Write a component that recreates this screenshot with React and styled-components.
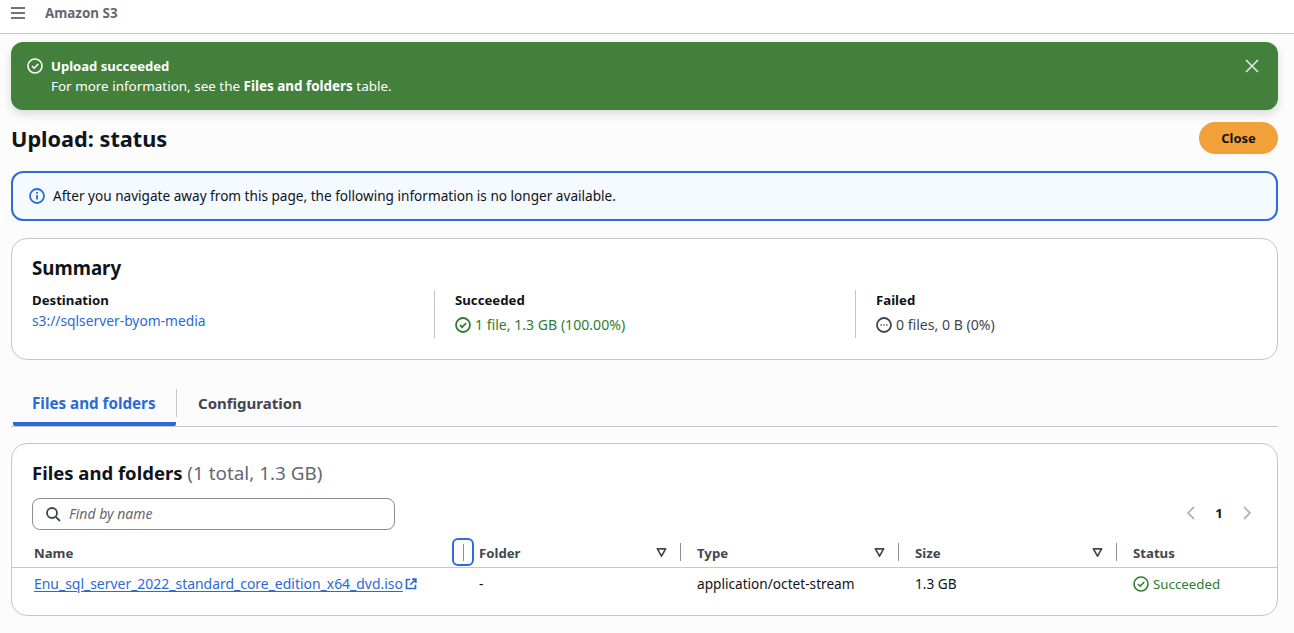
import React from "react";
import styled, { createGlobalStyle } from "styled-components";

const GlobalStyle = createGlobalStyle`
  html, body { margin: 0; padding: 0; background: #fcfcfd; }
  body {
    font-family: "Noto Sans", "Open Sans", sans-serif;
    font-size: 14px;
    line-height: 20px;
    color: #0f141a;
    overflow: hidden;
  }
`;

const Page = styled.div`
  width: 1294px;
  height: 633px;
  overflow: hidden;
`;

const TopBar = styled.header`
  background: #fff;
  border-bottom: 1px solid #c6c6cd;
  display: flex;
  align-items: center;
  padding: 0 0 7px 11px;
  height: 26px;
  color: #424650;
`;

const Crumb = styled.span`
  margin-left: 20px;
  font-size: 13.4px;
  font-weight: 700;
  color: #656871;
`;

const Main = styled.main`
  padding: 8px 16px 0 11px;
`;

const Flash = styled.div`
  height: 68px;
  box-sizing: border-box;
  background: #43803c;
  border-radius: 12px;
  box-shadow: 0 4px 10px rgba(0, 7, 22, 0.14);
  color: #fff;
  display: flex;
  align-items: flex-start;
  padding: 14px 16px 0 16px;
`;

const FlashIcon = styled.div`
  width: 16px;
  height: 16px;
  margin: 2px 8px 0 0;
  flex: none;
`;

const FlashText = styled.div`
  flex: 1;
  font-size: 13.45px;
`;

const FlashTitle = styled.div`
  font-size: 13.1px;
  font-weight: 700;
`;

const FlashClose = styled.div`
  width: 16px;
  height: 16px;
  margin: 2px 2px 0 0;
  color: #e3e8e2;
`;

const TitleRow = styled.div`
  display: flex;
  justify-content: space-between;
  align-items: center;
  margin-top: 12px;
  height: 32px;
`;

const Title = styled.h1`
  margin: 2px 0 0;
  font-size: 21.7px;
  line-height: 32px;
  font-weight: 700;
`;

const CloseButton = styled.button`
  width: 79px;
  height: 32px;
  border: none;
  border-radius: 16px;
  background: #f2a139;
  color: #0f141a;
  font: 700 13px "Noto Sans", sans-serif;
  padding: 0;
`;

const InfoBox = styled.div`
  margin-top: 17px;
  height: 50px;
  box-sizing: border-box;
  background: #f4faff;
  border: 2px solid #2f6bd9;
  border-radius: 12px;
  display: flex;
  align-items: center;
  padding-left: 16px;
  gap: 8px;
  font-size: 13.6px;
`;

const Card = styled.section`
  background: #fff;
  border: 1px solid #c6c6cd;
  border-radius: 16px;
  box-sizing: border-box;
`;

const SummaryCard = styled(Card)`
  margin-top: 17px;
  height: 122px;
  padding: 16px 20px 0 20px;
`;

const CardTitle = styled.h2`
  margin: 0;
  font-size: 18.7px;
  line-height: 26px;
  font-weight: 700;
`;

const Columns = styled.div`
  display: grid;
  grid-template-columns: 402px 421px 1fr;
  margin-top: 9px;
`;

const Column = styled.div`
  height: 48px;
  ${({ $divided }) => $divided && `
    border-left: 1px solid #c6c6cd;
    padding-left: 20px;
  `}
`;

const Label = styled.div`
  font-size: 13.2px;
  font-weight: 700;
  line-height: 20px;
`;

const Value = styled.div`
  display: flex;
  align-items: center;
  gap: 4px;
  margin-top: 5px;
  font-size: 14.1px;
  color: ${({ $color }) => $color || "#0f141a"};
`;

const BucketLink = styled.a`
  color: #2a6ad6;
  display: block;
  margin-top: 1px;
  font-size: 13.8px;
`;

const TabBar = styled.div`
  margin-top: 21px;
  height: 45px;
  display: flex;
  align-items: flex-start;
  border-bottom: 1px solid #c6c6cd;
`;

const Tab = styled.div`
  height: 45px;
  box-sizing: border-box;
  padding: 8px 20px 0 ${({ $active }) => ($active ? "19px" : "21px")};
  font-size: ${({ $active }) => ($active ? "15.2px" : "15px")};
  line-height: 28px;
  font-weight: 700;
  color: ${({ $active }) => ($active ? "#2a6ad6" : "#424650")};
  border-bottom: ${({ $active }) => ($active ? "4px solid #2a6ad6" : "none")};
  border-radius: 2px;
  margin-left: ${({ $active }) => ($active ? "2px" : "0")};
  width: ${({ $active }) => ($active ? "163px" : "auto")};
`;

const TabSeparator = styled.div`
  width: 1px;
  height: 28px;
  margin-top: 8px;
  background: #c6c6cd;
`;

const FilesCard = styled(Card)`
  margin-top: 16px;
  height: 173px;
  padding-top: 16px;
  overflow: hidden;
`;

const FilesTitle = styled(CardTitle)`
  margin-left: 20px;
  font-size: 18.5px;
  span { font-size: 18.9px; font-weight: 400; color: #656871; }
`;

const ToolRow = styled.div`
  display: flex;
  justify-content: space-between;
  align-items: center;
  margin: 12px 0 0 20px;
  padding-right: 24px;
`;

const SearchBox = styled.div`
  width: 363px;
  height: 32px;
  box-sizing: border-box;
  border: 1px solid #8c8c94;
  border-radius: 8px;
  background: #fff;
  display: flex;
  align-items: center;
  padding-left: 12px;
  gap: 8px;
  color: #424650;
`;

const Placeholder = styled.span`
  font-style: italic;
  font-size: 14px;
  color: #656871;
`;

const Pager = styled.div`
  display: flex;
  align-items: center;
  gap: 14px;
  margin-top: -2px;
  font-weight: 700;
  font-size: 13.2px;
  color: #b4b4bb;
  span { color: #0f141a; width: 16px; text-align: center; }
`;

const Row = styled.div`
  display: grid;
  grid-template-columns: 450px repeat(3, 218px) 1fr;
`;

const HeaderRow = styled(Row)`
  height: 32px;
  margin-top: 5px;
  border-bottom: 1px solid #c6c6cd;
`;

const HeadCell = styled.div`
  position: relative;
  display: flex;
  align-items: center;
  justify-content: space-between;
  padding: 3px 13px 0 ${({ $first }) => ($first ? "22px" : "17px")};
  font-size: 13.2px;
  font-weight: 700;
  color: #424650;
  box-sizing: border-box;
  height: 32px;
`;

const Resizer = styled.div`
  position: absolute;
  right: -1px;
  top: 8px;
  width: 1px;
  height: 18px;
  background: #8c8c94;
`;

const FocusRing = styled.div`
  position: absolute;
  right: -12px;
  top: 3px;
  width: 22px;
  height: 28px;
  box-sizing: border-box;
  border: 2px solid #2f6bd9;
  border-radius: 6px;
  display: flex;
  align-items: center;
  justify-content: center;
  &::after {
    content: "";
    width: 1px;
    height: 17px;
    background: #8c8c94;
  }
`;

const Cell = styled.div`
  display: flex;
  align-items: center;
  gap: 4px;
  height: 32px;
  padding-left: ${({ $first }) => ($first ? "22px" : "17px")};
  font-size: ${({ $size }) => $size || "13.65px"};
  color: ${({ $color }) => $color || "#0f141a"};
`;

const NameCell = styled(Cell)`
  gap: 2px;
`;

const FileLink = styled.a`
  color: #2a6ad6;
  font-size: 13.95px;
  text-decoration: underline;
  text-underline-offset: 2px;
`;

const CheckCircle = ({ size = 16, width = 2 }) => (
  <svg viewBox="0 0 16 16" width={size} height={size} fill="none" stroke="currentColor" strokeWidth={width}>
    <circle cx="8" cy="8" r="7" />
    <path d="M5 8l2.2 2.2L11.2 6" />
  </svg>
);

const FilterIcon = () => (
  <svg viewBox="0 0 12 12" width="11" height="11" fill="none" stroke="#424650" strokeWidth="1.8">
    <path d="M1.5 2h9L6 10z" strokeLinejoin="round" />
  </svg>
);

const App = () => {
  return (
    <Page>
      <GlobalStyle />
      <TopBar>
        <svg viewBox="0 0 14 12" width="14" height="12" fill="none" stroke="#424650" strokeWidth="1.6">
          <path d="M0 1h14M0 6h14M0 11h14" />
        </svg>
        <Crumb>Amazon S3</Crumb>
      </TopBar>
      <Main>
        <Flash>
          <FlashIcon><CheckCircle width={1.6} /></FlashIcon>
          <FlashText>
            <FlashTitle>Upload succeeded</FlashTitle>
            <div>For more information, see the <b>Files and folders</b> table.</div>
          </FlashText>
          <FlashClose>
            <svg viewBox="0 0 16 16" width="16" height="16" fill="none" stroke="currentColor" strokeWidth="1.6">
              <path d="M2 2l12 12M14 2L2 14" />
            </svg>
          </FlashClose>
        </Flash>
        <TitleRow>
          <Title>Upload: status</Title>
          <CloseButton>Close</CloseButton>
        </TitleRow>
        <InfoBox>
          <svg viewBox="0 0 16 16" width="16" height="16" fill="none" stroke="#2f6bd9" strokeWidth="1.8">
            <circle cx="8" cy="8" r="7" />
            <path d="M8 7v4.5M8 4v1.8" />
          </svg>
          After you navigate away from this page, the following information is no longer available.
        </InfoBox>
        <SummaryCard>
          <CardTitle>Summary</CardTitle>
          <Columns>
            <Column>
              <Label>Destination</Label>
              <BucketLink>s3://sqlserver-byom-media</BucketLink>
            </Column>
            <Column $divided>
              <Label>Succeeded</Label>
              <Value $color="#2e7d32">
                <CheckCircle width={1.8} />
                1 file, 1.3 GB (100.00%)
              </Value>
            </Column>
            <Column $divided>
              <Label>Failed</Label>
              <Value $color="#424650">
                <svg viewBox="0 0 16 16" width="16" height="16" fill="none" stroke="currentColor" strokeWidth="1.8">
                  <circle cx="8" cy="8" r="7" />
                  <path d="M4.6 8h1M7.5 8h1M10.4 8h1" />
                </svg>
                0 files, 0 B (0%)
              </Value>
            </Column>
          </Columns>
        </SummaryCard>
        <TabBar>
          <Tab $active>Files and folders</Tab>
          <TabSeparator />
          <Tab>Configuration</Tab>
        </TabBar>
        <FilesCard>
          <FilesTitle>Files and folders <span>(1 total, 1.3 GB)</span></FilesTitle>
          <ToolRow>
            <SearchBox>
              <svg viewBox="0 0 16 16" width="16" height="16" fill="none" stroke="currentColor" strokeWidth="1.8">
                <circle cx="7" cy="7" r="5" />
                <path d="M10.6 10.6L15 15" />
              </svg>
              <Placeholder>Find by name</Placeholder>
            </SearchBox>
            <Pager>
              <svg viewBox="0 0 12 16" width="12" height="16" fill="none" stroke="currentColor" strokeWidth="1.8">
                <path d="M9 2L3 8l6 6" />
              </svg>
              <span>1</span>
              <svg viewBox="0 0 12 16" width="12" height="16" fill="none" stroke="currentColor" strokeWidth="1.8">
                <path d="M3 2l6 6-6 6" />
              </svg>
            </Pager>
          </ToolRow>
          <HeaderRow>
            <HeadCell $first>Name<FocusRing /></HeadCell>
            <HeadCell>Folder<FilterIcon /><Resizer /></HeadCell>
            <HeadCell>Type<FilterIcon /><Resizer /></HeadCell>
            <HeadCell>Size<FilterIcon /><Resizer /></HeadCell>
            <HeadCell>Status</HeadCell>
          </HeaderRow>
          <Row>
            <NameCell $first>
              <FileLink>Enu_sql_server_2022_standard_core_edition_x64_dvd.iso</FileLink>
              <svg viewBox="0 0 16 16" width="12" height="12" fill="none" stroke="#2a6ad6" strokeWidth="2.2">
                <path d="M7 2H2v12h12V9M9.5 1.5h5v5M14 2L7 9" />
              </svg>
            </NameCell>
            <Cell>-</Cell>
            <Cell>application/octet-stream</Cell>
            <Cell>1.3 GB</Cell>
            <Cell $color="#2e7d32" $size="13.3px"><CheckCircle width={1.6} />Succeeded</Cell>
          </Row>
        </FilesCard>
      </Main>
    </Page>
  );
};

export default App;
